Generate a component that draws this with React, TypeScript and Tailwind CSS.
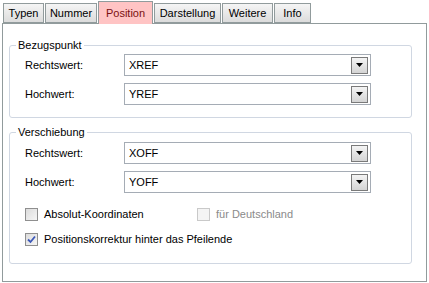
import React from 'react';

const font = { fontFamily: '"Liberation Sans", Arial, sans-serif' };

const tabs = [
  { t: 'Typen', w: 'w-[41px]' },
  { t: 'Nummer', w: 'w-[52px]' },
  { t: 'Position', w: 'w-[55px]' },
  { t: 'Darstellung', w: 'w-[67px]' },
  { t: 'Weitere', w: 'w-[51px]' },
  { t: 'Info', w: 'w-[37px]' },
];

function Combo({ value }: { value: string }) {
  return (
    <div className="flex items-center w-[247px] h-[22px] border border-[#a5acb5] bg-white pl-[4px] pr-[2px]">
      <span className="flex-1 text-black">{value}</span>
      <div className="w-[17px] h-[17px] border border-[#7a7a7a] bg-gradient-to-b from-[#f4f4f4] to-[#d4d4d4] flex items-center justify-center">
        <svg width="7" height="4" viewBox="0 0 7 4">
          <path d="M0 0h7L3.5 4z" fill="#000" />
        </svg>
      </div>
    </div>
  );
}

function Row({ label, value }: { label: string; value: string }) {
  return (
    <div className="flex items-center">
      <span className="w-[99px] text-black">{label}</span>
      <Combo value={value} />
    </div>
  );
}

function Check({ label, checked, disabled }: { label: string; checked?: boolean; disabled?: boolean }) {
  return (
    <div className="flex items-center gap-[6px]">
      <div className={`w-[13px] h-[13px] border flex items-center justify-center ${disabled ? 'border-[#c9c9c9] bg-[#f4f4f4]' : 'border-[#8f8f8f] bg-gradient-to-br from-[#dcdcdc] to-[#f6f6f6]'}`}>
        {checked && (
          <svg width="9" height="9" viewBox="0 0 9 9">
            <path d="M1 4.5l2.5 2.5L8 1.5" stroke="#3c58b8" strokeWidth="1.8" fill="none" />
          </svg>
        )}
      </div>
      <span className={disabled ? 'text-[#8a8a8a]' : 'text-black'}>{label}</span>
    </div>
  );
}

function Group({ title, children, className }: { title: string; children: React.ReactNode; className?: string }) {
  return (
    <fieldset className={`border border-[#d0d7e2] rounded-[3px] px-[15px] ${className ?? ''}`}>
      <legend className="px-[2px] -ml-[9px] text-black">{title}</legend>
      {children}
    </fieldset>
  );
}

export default function App() {
  return (
    <div className="w-[429px] h-[283px] bg-white text-[11px] leading-[13px]" style={font}>
      {/* Tabs */}
      <div className="flex items-end h-[23px] pl-[3px]">
        {tabs.map(({ t, w }) =>
          t === 'Position' ? (
            <div
              key={t}
              className={`${w} h-[23px] mr-[1px] mb-[-1px] relative z-10 flex items-center justify-center bg-[#ffc4c4] border border-b-0 border-[#919b9c] text-[#7a1010]`}
            >
              {t}
            </div>
          ) : (
            <div
              key={t}
              className={`${w} h-[20px] mr-[1px] flex items-center justify-center border border-[#919b9c] bg-gradient-to-b from-[#f5f5f5] to-[#dcdcdc] text-black`}
            >
              {t}
            </div>
          )
        )}
      </div>

      {/* Panel */}
      <div className="ml-[2px] w-[425px] h-[259px] border border-[#919b9c] bg-white pl-[6px] pr-[14px] pt-[15px]">
        <Group title="Bezugspunkt" className="h-[79px] pt-[1px]">
          <div className="flex flex-col gap-[7px] pt-[1px]">
            <Row label="Rechtswert:" value="XREF" />
            <Row label="Hochwert:" value="YREF" />
          </div>
        </Group>

        <Group title="Verschiebung" className="mt-[8px] h-[138px]">
          <div className="flex flex-col gap-[7px] pt-[3px]">
            <Row label="Rechtswert:" value="XOFF" />
            <Row label="Hochwert:" value="YOFF" />
          </div>
          <div className="flex flex-col gap-[12px] mt-[15px]">
            <div className="flex">
              <div className="w-[172px]">
                <Check label="Absolut-Koordinaten" />
              </div>
              <Check label="für Deutschland" disabled />
            </div>
            <Check label="Positionskorrektur hinter das Pfeilende" checked />
          </div>
        </Group>
      </div>
    </div>
  );
}
